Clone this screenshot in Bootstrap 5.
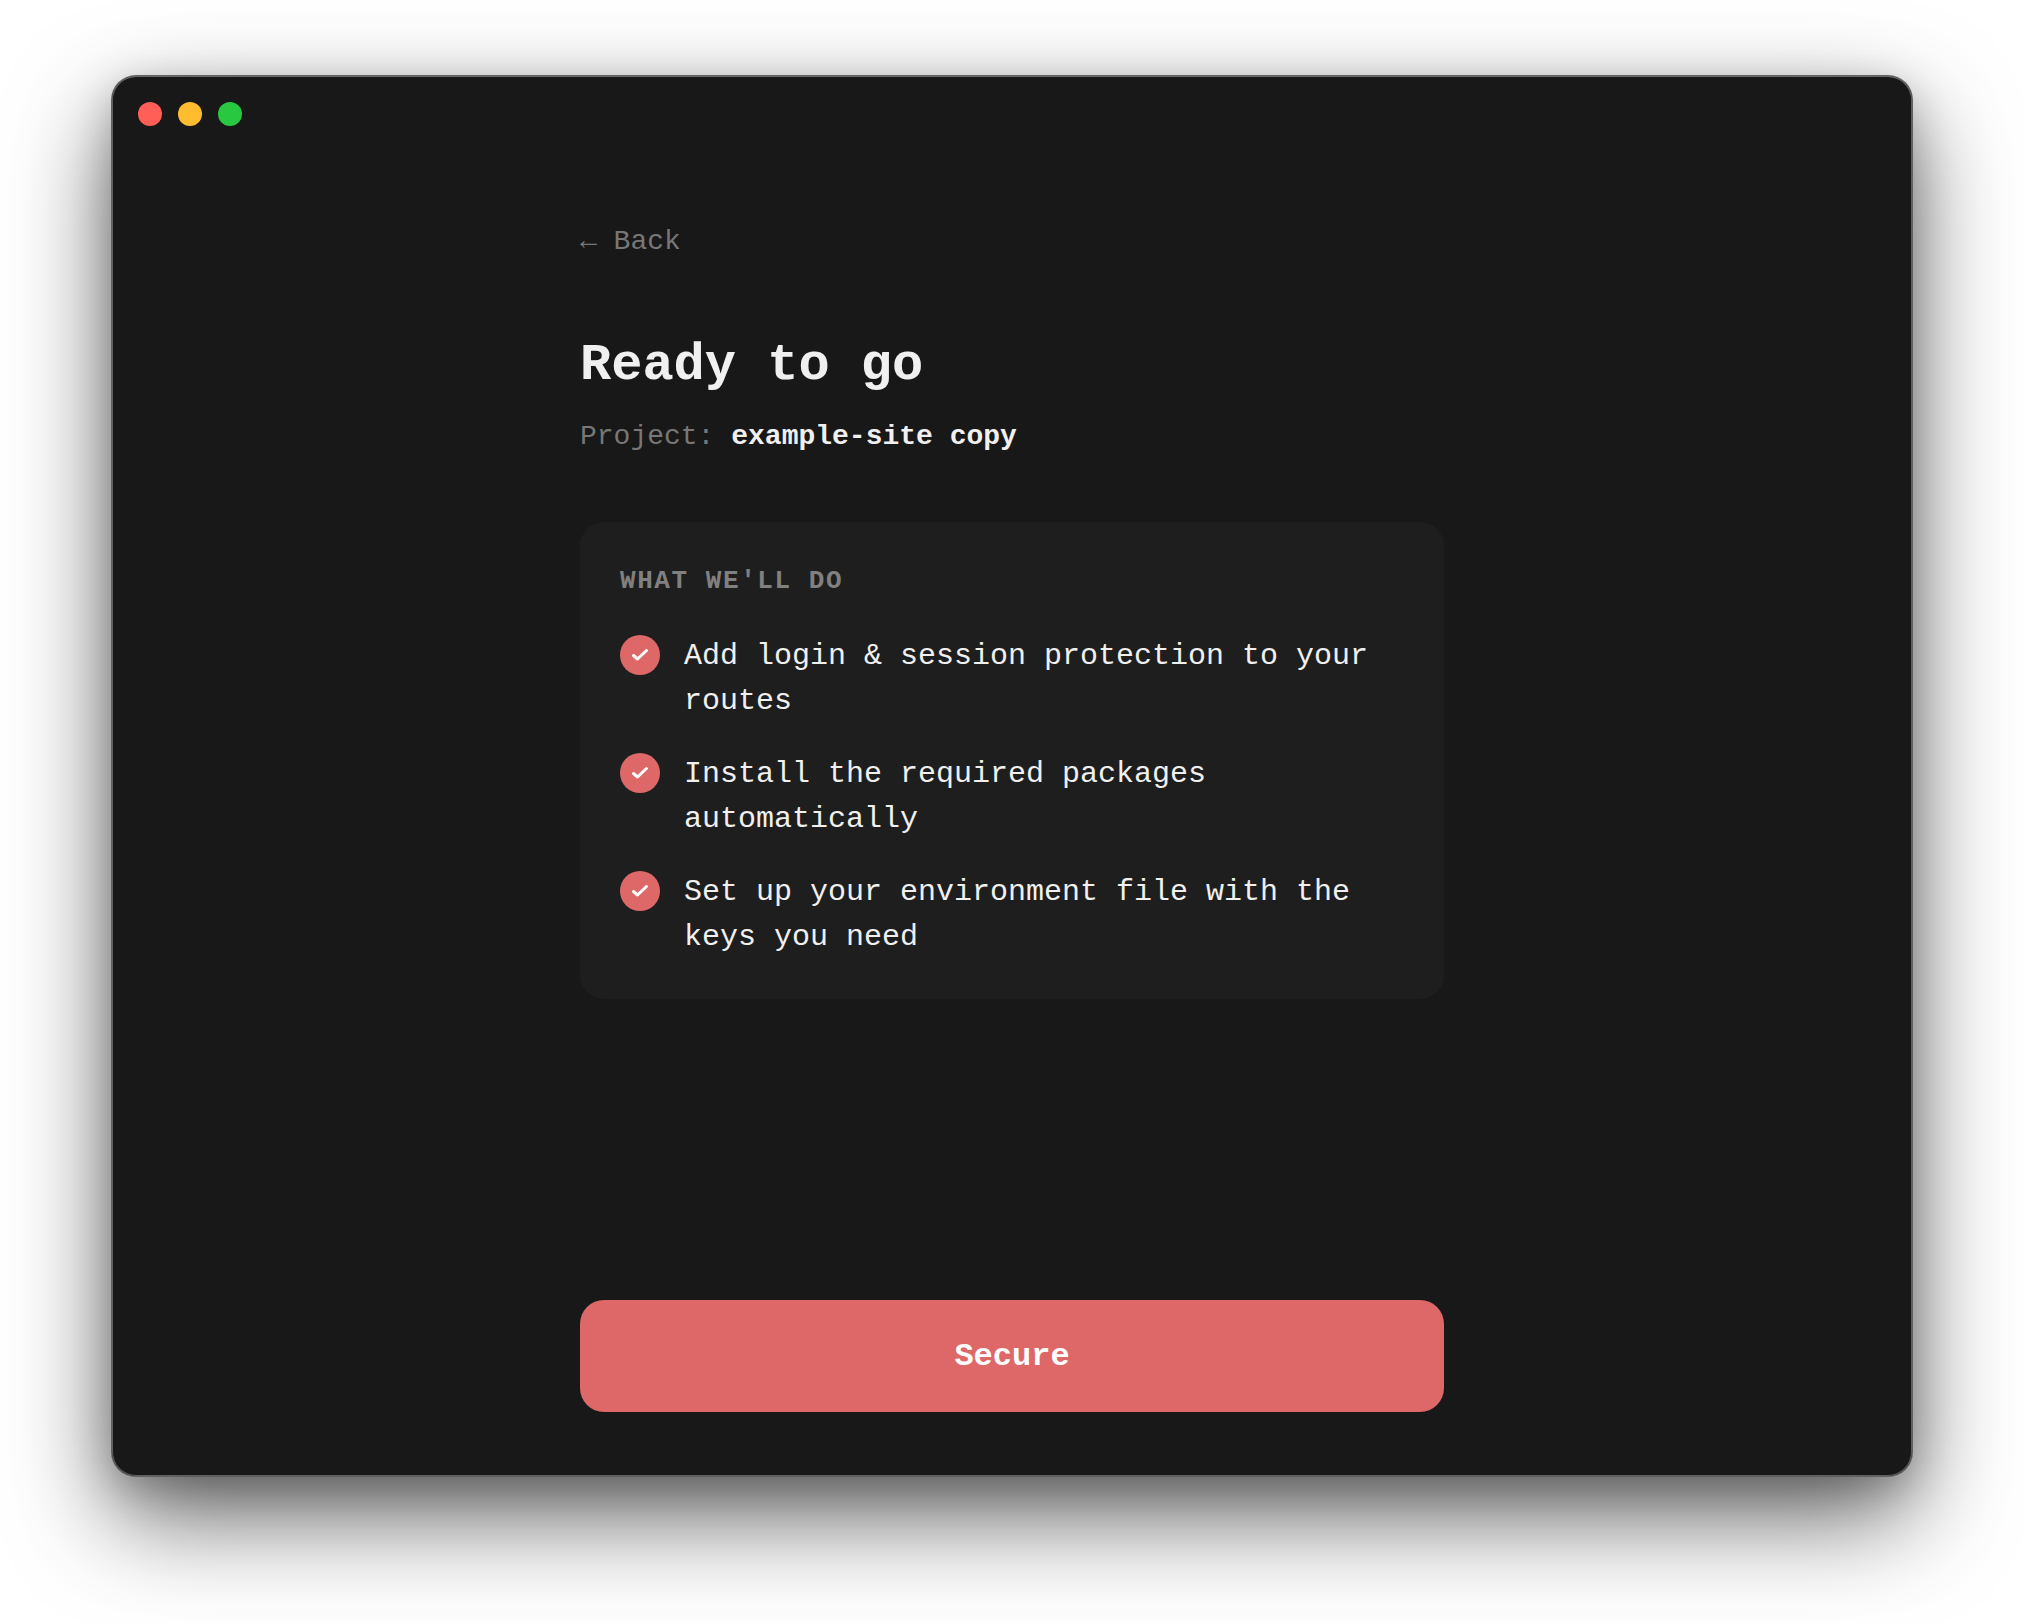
<!DOCTYPE html>
<html lang="en">
<head>
<meta charset="utf-8">
<title>Ready to go</title>
<link href="https://cdn.jsdelivr.net/npm/bootstrap@5.3.0/dist/css/bootstrap.min.css" rel="stylesheet">
<style>
html,body{height:100%}
body{background:#fff;font-family:"Liberation Mono","Courier New",monospace;color:#f0f0f0;overflow:hidden}
.stage{width:2024px;height:1624px;padding:76px 112px 148px}
.win{width:1800px;height:1400px;background:#181818;border-radius:24px;box-shadow:inset 0 1px 0 #6a6a6a,inset 0 0 0 1px #606060,0 0 0 1px #606060,0 40px 100px rgba(0,0,0,.62),0 12px 40px rgba(0,0,0,.2)}
.bar{padding:26px 26px 0;height:50px}
.dot{width:24px;height:24px;border-radius:50%;display:block}
.d-r{background:#ff5f57}.d-y{background:#febc2e}.d-g{background:#28c840}
.col-main{width:864px;height:1350px;padding:95px 0 64px}
.back{font-size:28px;line-height:42px;color:#777;text-decoration:none;display:block}
.ttl{font-size:52px;line-height:62px;font-weight:700;color:#f0f0f0;margin:72px 0 19px}
.proj{font-size:28px;line-height:42px;color:#777;margin:0 0 64px}
.proj b{color:#f0f0f0;font-weight:700}
.plan{background:#1e1e1e;border-radius:24px;padding:40px 40px 39px}
.plan-h{font-size:26px;line-height:38px;font-weight:700;letter-spacing:1.56px;color:#808080;margin-bottom:34px}
.plan-l{font-size:30px;line-height:45px;color:#f0f0f0;gap:28px}
.tick{width:40px;height:40px;background:#de6868;border-radius:50%;flex:none;margin:1px 24px 0 0}
.go{height:112px;background:#de6868;border:0;border-radius:24px;color:#fff;font-size:32px;font-weight:700;font-family:inherit;padding-top:8px}
.go:hover,.go:active{background:#de6868!important;color:#fff!important}
</style>
</head>
<body>
<div class="stage">
  <div class="win d-flex flex-column">
    <div class="bar d-flex gap-3">
      <span class="dot d-r"></span><span class="dot d-y"></span><span class="dot d-g"></span>
    </div>
    <div class="col-main mx-auto d-flex flex-column">
      <a class="back" href="#">← Back</a>
      <h1 class="ttl">Ready to go</h1>
      <p class="proj">Project: <b>example-site copy</b></p>
      <div class="plan">
        <div class="plan-h">WHAT WE'LL DO</div>
        <div class="plan-l d-flex flex-column">
          <div class="d-flex">
            <span class="tick d-flex align-items-center justify-content-center"><svg width="20" height="20" viewBox="0 0 20 20" fill="none" stroke="#fff" stroke-width="3" stroke-linecap="round" stroke-linejoin="round"><path d="M3.5 10.5 7.500 14 16.500 5.500"/></svg></span>
            <span>Add login &amp; session protection to your routes</span>
          </div>
          <div class="d-flex">
            <span class="tick d-flex align-items-center justify-content-center"><svg width="20" height="20" viewBox="0 0 20 20" fill="none" stroke="#fff" stroke-width="3" stroke-linecap="round" stroke-linejoin="round"><path d="M3.5 10.5 7.500 14 16.500 5.500"/></svg></span>
            <span>Install the required packages automatically</span>
          </div>
          <div class="d-flex">
            <span class="tick d-flex align-items-center justify-content-center"><svg width="20" height="20" viewBox="0 0 20 20" fill="none" stroke="#fff" stroke-width="3" stroke-linecap="round" stroke-linejoin="round"><path d="M3.5 10.5 7.500 14 16.500 5.500"/></svg></span>
            <span>Set up your environment file with the keys you need</span>
          </div>
        </div>
      </div>
      <button class="btn go w-100 mt-auto" type="button">Secure</button>
    </div>
  </div>
</div>
<script src="https://cdn.jsdelivr.net/npm/bootstrap@5.3.0/dist/js/bootstrap.bundle.min.js"></script>
</body>
</html>
